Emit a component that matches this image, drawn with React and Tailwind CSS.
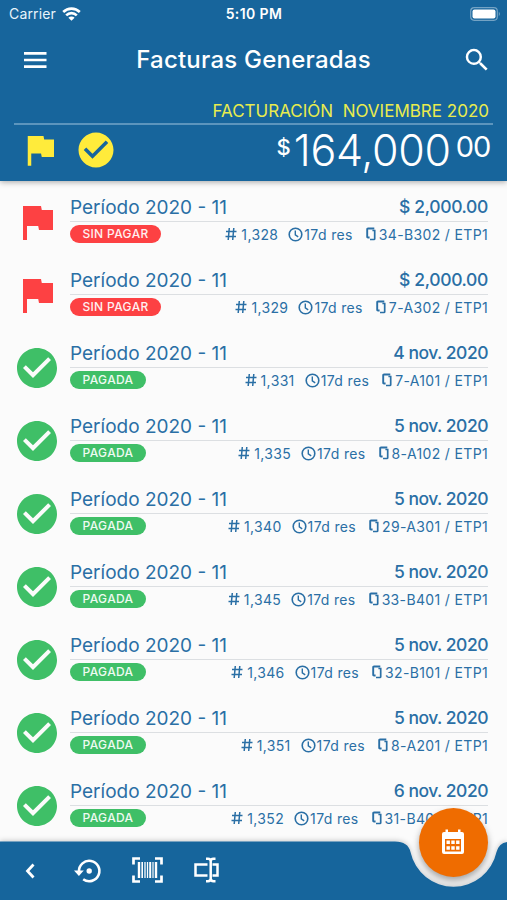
import { MdCheckCircle, MdFlag, MdSearch } from 'react-icons/md';

const invoices = [
  { id: '1,328', amount: '$ 2,000.00', unit: '34-B302 / ETP1', paid: false },
  { id: '1,329', amount: '$ 2,000.00', unit: '7-A302 / ETP1', paid: false },
  { id: '1,331', amount: '4 nov. 2020', unit: '7-A101 / ETP1', paid: true },
  { id: '1,335', amount: '5 nov. 2020', unit: '8-A102 / ETP1', paid: true },
  { id: '1,340', amount: '5 nov. 2020', unit: '29-A301 / ETP1', paid: true },
  { id: '1,345', amount: '5 nov. 2020', unit: '33-B401 / ETP1', paid: true },
  { id: '1,346', amount: '5 nov. 2020', unit: '32-B101 / ETP1', paid: true },
  { id: '1,351', amount: '5 nov. 2020', unit: '8-A201 / ETP1', paid: true },
  { id: '1,352', amount: '6 nov. 2020', unit: '31-B401 / ETP1', paid: true },
];

export default function App() {
  return (
    <div className="relative flex h-[900px] w-[507px] flex-col overflow-hidden bg-[#fbfbfb] font-['Inter','Noto_Sans',sans-serif] whitespace-nowrap text-[#2a6fa5]">
      <Header />
      <main className="flex flex-1 flex-col pt-[3px]">
        {invoices.map((invoice) => (
          <InvoiceRow key={invoice.id} invoice={invoice} />
        ))}
      </main>
      <BottomBar />
    </div>
  );
}

function Header() {
  return (
    <header className="z-10 flex h-[181px] shrink-0 flex-col bg-[#17659c] text-white shadow-[0_1px_6px_rgba(0,0,0,0.35)]">
      {/* Status bar */}
      <div className="grid h-[27px] grid-cols-3 items-center pr-[6px] pl-[9px] text-[14px]">
        <div className="flex items-center gap-[6px] tracking-[0.15px] text-[#e8f4fb]">
          <span>Carrier</span>
          <WifiIcon />
        </div>
        <span className="pr-[2px] text-center text-[14px] font-semibold tracking-[0.4px]">5:10 PM</span>
        <div className="flex justify-end">
          <BatteryIcon />
        </div>
      </div>

      {/* Title */}
      <div className="flex h-[66px] items-center justify-between pr-[15px] pl-[20px]">
        <MenuIcon />
        <h1 className="pr-[5px] text-[24px] font-medium tracking-[0.22px]">Facturas Generadas</h1>
        <MdSearch className="size-[30px]" />
      </div>

      {/* Monthly total */}
      <div className="mx-[14px] flex h-[32px] items-center justify-end border-b-2 border-[#5c95bd] pt-[7px] pr-[4px] text-[17px] text-[#e9ec4e]">
        <span className="whitespace-pre">FACTURACIÓN  NOVIEMBRE 2020</span>
      </div>
      <div className="flex items-start justify-between pr-[17px] pl-[19px]">
        <div className="flex items-center gap-[14px] pt-[4px] text-[#ffeb3b]">
          <MdFlag className="size-[42px]" />
          <MdCheckCircle className="size-[42px]" />
        </div>
        <div className="flex items-start">
          <span className="pt-[8px] text-[22px] leading-[28px] font-medium">$</span>
          <span className="ml-[3px] pt-[1px] text-[43px] leading-[48px] font-light tracking-[-0.3px]">164,000</span>
          <span className="ml-[5px] pt-[4px] text-[29px] leading-[36px] tracking-[-1.2px]">00</span>
        </div>
      </div>
    </header>
  );
}

function InvoiceRow({ invoice }) {
  return (
    <div className="flex h-[73px] shrink-0 pr-[19px] pl-[13px]">
      <div className="w-[57px] shrink-0 pt-[14px]">
        {invoice.paid ? (
          <MdCheckCircle className="size-[48px] text-[#3fbf67]" />
        ) : (
          <MdFlag className="size-[48px] text-[#fd4143]" />
        )}
      </div>
      <div className="flex flex-1 flex-col pt-[9px]">
        <div className="flex h-[29px] items-center justify-between border-b border-[#dcdfe2]">
          <span className="pt-[2px] text-[19px]">Período 2020 - 11</span>
          <span
            className={`text-[17.5px] font-medium ${
              invoice.paid ? 'tracking-[-0.5px]' : 'tracking-[-0.35px]'
            }`}
          >
            {invoice.amount}
          </span>
        </div>
        <div className="flex h-[24px] items-center justify-between text-[14px] tracking-[0.35px]">
          {invoice.paid ? (
            <span className="flex h-[18px] w-[76px] items-center justify-center rounded-full bg-[#3fbf67] text-[12px] font-medium text-[#eefaf1]">
              PAGADA
            </span>
          ) : (
            <span className="flex h-[18px] w-[91px] items-center justify-center rounded-full bg-[#fd4143] text-[12px] font-medium text-[#fff0f0]">
              SIN PAGAR
            </span>
          )}
          <div className="flex items-center">
            <HashIcon />
            <span className="ml-[4px]">{invoice.id}</span>
            <ClockIcon />
            <span className="ml-px">17d res</span>
            <UnitIcon />
            <span className="ml-[3px]">{invoice.unit}</span>
          </div>
        </div>
      </div>
    </div>
  );
}

function BottomBar() {
  return (
    <nav className="absolute inset-x-0 bottom-0 h-[100px]">
      <svg className="absolute inset-0" width="507" height="100" viewBox="0 0 507 100">
        <defs>
          <filter id="barShadow" x="-5%" y="-20%" width="110%" height="140%">
            <feDropShadow dx="0" dy="-1" stdDeviation="2.5" floodOpacity="0.2" />
          </filter>
        </defs>
        <path
          d="M0 41.5H395Q408 41.5 410.5 52A44 44 0 0 0 496.5 52Q499 43 507 42V100H0Z"
          fill="#17659c"
          filter="url(#barShadow)"
        />
      </svg>
      <div className="relative flex h-full items-end pb-[13px] pl-[14px] text-white">
        <svg className="size-[32px]" viewBox="0 0 32 32" fill="none" stroke="currentColor" strokeWidth="2.8">
          <path d="M19.5 9.5L13.5 16l6 6.5" />
        </svg>
        <RestoreIcon />
        <BarcodeIcon />
        <RenameIcon />
      </div>
      <button className="absolute top-[8px] left-[419px] flex size-[69px] items-center justify-center rounded-full bg-[#ef6c00] pr-[1px] pb-[2px] text-white shadow-[0_4px_7px_rgba(0,0,0,0.35)]">
        <CalendarIcon />
      </button>
    </nav>
  );
}

function MenuIcon() {
  return (
    <svg width="30" height="30" viewBox="0 0 30 30" stroke="currentColor" strokeWidth="2.7">
      <path d="M4 8.3h22.5M4 15h22.5M4 21.700h22.5" />
    </svg>
  );
}

function WifiIcon() {
  return (
    <svg width="19" height="14" viewBox="0 0 19 14" fill="none" stroke="white" strokeWidth="2.6">
      <path d="M1.2 5a11.800 11.800 0 0 1 16.600 0" />
      <path d="M4.2 8.3a7.500 7.500 0 0 1 10.600 0" />
      <path d="M9.5 13.800L6.400 10.700a4.400 4.400 0 0 1 6.200 0Z" fill="white" stroke="none" />
    </svg>
  );
}

function BatteryIcon() {
  return (
    <svg width="31" height="14" viewBox="0 0 31 14">
      <rect x="0.7" y="0.7" width="26.6" height="12.6" rx="3.5" fill="none" stroke="#74a3c4" strokeWidth="1.2" />
      <rect x="2.5" y="2.5" width="23" height="9" rx="2" fill="white" />
      <path d="M28.800 4.800q2.200 2.200 0 4.400Z" fill="#74a3c4" />
    </svg>
  );
}

function HashIcon() {
  return (
    <svg width="12" height="14" viewBox="0 0 12 14" fill="none" stroke="currentColor" strokeWidth="1.5">
      <path d="M4.300 1L3.200 13M8.800 1L7.700 13M1 4.500h10.500M0.500 9.500H11" />
    </svg>
  );
}

function ClockIcon() {
  return (
    <svg className="ml-[10px]" width="15" height="15" viewBox="0 0 15 15" fill="none" stroke="currentColor" strokeWidth="1.6">
      <circle cx="7.5" cy="7.5" r="6.3" />
      <path d="M7.300 3.500v4.300l2.900 2.100" strokeWidth="1.400" />
    </svg>
  );
}

// two interlocking brackets, open at the top right and bottom left
function UnitIcon() {
  return (
    <svg className="ml-[13px]" width="10" height="14" viewBox="0 0 10 14" fill="none" stroke="currentColor">
      <path d="M3.600 10.500H2q-0.800 0-0.800-0.800V2.300Q1.200 1.500 2 1.500H8.300" strokeWidth="1.900" />
      <path d="M6.400 3.500H8.700V11.700q0 0.800-0.800 0.800H4" strokeWidth="1.700" />
    </svg>
  );
}

function RestoreIcon() {
  return (
    <svg className="mb-px ml-[28px]" width="29" height="30" viewBox="0 0 29 30" fill="none" stroke="currentColor" strokeWidth="2.6">
      <path d="M5 15.500A10.200 10.200 0 1 1 9.200 23.300" />
      <path d="M0 14.500h9.800L4.900 20Z" fill="currentColor" stroke="none" />
      <circle cx="15.200" cy="15" r="2.700" fill="currentColor" stroke="none" />
    </svg>
  );
}

function BarcodeIcon() {
  return (
    <svg className="mb-[4px] ml-[29px]" width="31" height="26" viewBox="0 0 31 26" fill="none" stroke="currentColor">
      <path d="M1.500 7.500V1.500H8M23 1.500h6.500v6M1.500 18.500v6H8M23 24.500h6.500v-6" strokeWidth="2.7" />
      <path d="M7 5v16M24 5v16" strokeWidth="2.4" />
      <path d="M10.200 5v16" strokeWidth="1.6" />
      <path d="M13 5v16M15.500 5v16" strokeWidth="1.3" />
      <path d="M18.200 5v16" strokeWidth="2" />
      <path d="M21 5v16" strokeWidth="1.2" />
    </svg>
  );
}

function RenameIcon() {
  return (
    <svg className="mb-[4px] ml-[30px]" width="27" height="26" viewBox="0 0 27 26" fill="none" stroke="currentColor" strokeWidth="2.5">
      <path d="M14.500 7.500H2.500v11h12M19.500 7.500h5v11h-5" />
      <path d="M13 1.800h2q2.700 0 2.700 2.400v17.600q0 2.400-2.700 2.400h-2M22.500 1.800h-2q-2.800 0-2.800 2.400M22.500 24.200h-2q-2.800 0-2.800-2.400" />
    </svg>
  );
}

function CalendarIcon() {
  return (
    <svg width="24" height="26" viewBox="0 0 24 26" fill="currentColor">
      <path
        fillRule="evenodd"
        d="M4.500 0.500h2.500V3h10V0.500h2.500V3h1.500q2 0 2 2v18q0 2-2 2H3q-2 0-2-2V5q0-2 2-2h1.500ZM4 10v12.500h16V10Z"
      />
      <path d="M5.500 11.500h3.400v3.600H5.500zM10.300 11.500h3.400v3.600h-3.400zM15.100 11.500h3.400v3.600h-3.400zM5.500 17.200h3.400v3.600H5.500zM10.300 17.200h3.400v3.600h-3.400zM15.100 17.200h3.400v3.600h-3.400z" />
    </svg>
  );
}
